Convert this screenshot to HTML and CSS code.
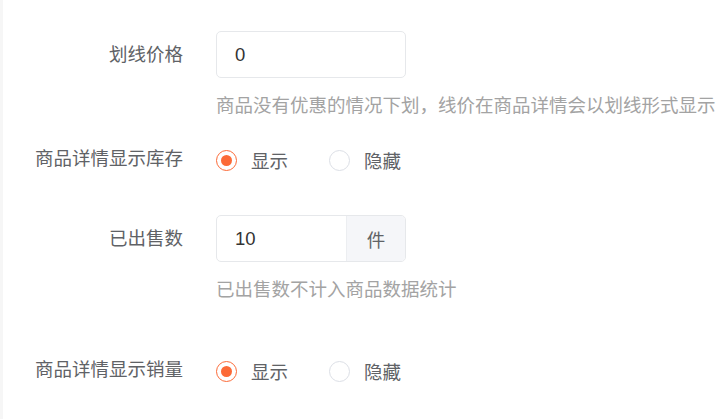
FILE: index.html
```html
<!DOCTYPE html>
<html lang="zh-CN">
<head>
<meta charset="utf-8">
<link rel="stylesheet" href="styles.css">
</head>
<body>
<div class="form">
  <div class="item item-price">
    <div class="label">划线价格</div>
    <div class="content">
      <div class="input"><span class="value">0</span></div>
      <div class="help">商品没有优惠的情况下划，线价在商品详情会以划线形式显示</div>
    </div>
  </div>
  <div class="item item-stock">
    <div class="label">商品详情显示库存</div>
    <div class="content radios">
      <label class="radio checked"><span class="dot"></span><span class="rtext">显示</span></label>
      <label class="radio"><span class="dot"></span><span class="rtext">隐藏</span></label>
    </div>
  </div>
  <div class="item item-sold">
    <div class="label">已出售数</div>
    <div class="content">
      <div class="input group"><span class="value">10</span><span class="append">件</span></div>
      <div class="help">已出售数不计入商品数据统计</div>
    </div>
  </div>
  <div class="item item-sales">
    <div class="label">商品详情显示销量</div>
    <div class="content radios">
      <label class="radio checked"><span class="dot"></span><span class="rtext">显示</span></label>
      <label class="radio"><span class="dot"></span><span class="rtext">隐藏</span></label>
    </div>
  </div>
</div>
</body>
</html>
```
FILE: styles.css
```css
html, body {
  margin: 0;
  padding: 0;
  background: #fff;
}
body {
  font-family: "Noto Sans CJK SC", "Liberation Sans", sans-serif;
  font-size: 18.5px;
}
.form {
  border-left: 3px solid #f6f6f6;
  height: 419px;
  box-sizing: border-box;
  padding-top: 31px;
}
.item {
  display: flex;
  align-items: flex-start;
}
.label {
  width: 180px;
  flex: none;
  text-align: right;
  line-height: 45px;
  color: #606266;
  margin-right: 33px;
}
.content {
  display: flex;
  flex-direction: column;
}
.input {
  width: 190px;
  height: 47px;
  box-sizing: border-box;
  border: 1px solid #e6e8eb;
  border-radius: 5px;
  display: flex;
  align-items: center;
  color: #333;
  font-family: "Liberation Sans", "Noto Sans CJK SC", sans-serif;
  overflow: hidden;
}
.value {
  flex: 1;
  padding-left: 18px;
}
.append {
  width: 58px;
  align-self: stretch;
  display: flex;
  align-items: center;
  justify-content: center;
  background: #f5f6f9;
  border-left: 1px solid #eceef1;
  color: #606266;
  font-family: "Noto Sans CJK SC", sans-serif;
}
.help {
  margin-top: 13px;
  line-height: 27px;
  color: #a3a3a3;
  white-space: nowrap;
}
.item-price { margin-bottom: 17px; }
.item-stock { margin-bottom: 31px; }
.item-sold { margin-bottom: 44px; }
.radios {
  flex-direction: row;
  align-items: center;
  height: 47px;
  padding-top: 2px;
}
.radio {
  display: flex;
  align-items: center;
  margin-right: 41px;
  color: #606266;
}
.dot {
  width: 21px;
  height: 21px;
  box-sizing: border-box;
  border: 1px solid #dcdfe6;
  border-radius: 50%;
  margin-right: 14px;
  position: relative;
}
.radio.checked .dot {
  border: 1.5px solid #fc6a37;
}
.radio.checked .dot::after {
  content: "";
  position: absolute;
  left: 50%;
  top: 50%;
  width: 11px;
  height: 11px;
  margin: -5.5px 0 0 -5.5px;
  border-radius: 50%;
  background: #fc6a37;
}
.rtext {
  line-height: 45px;
}
```
